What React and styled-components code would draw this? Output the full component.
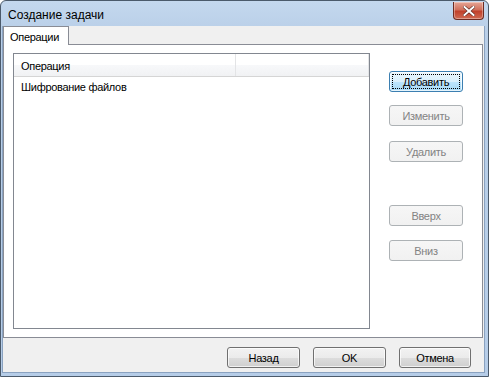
import React from 'react';
import styled, { createGlobalStyle } from 'styled-components';

const GlobalStyle = createGlobalStyle`
	html, body {
		margin: 0;
		padding: 0;
		background: #ffffff;
	}
	body {
		font-family: "Liberation Sans", Arial, sans-serif;
		font-size: 11px;
		letter-spacing: -0.3px;
		color: #000;
	}
`;

const StyledWindow = styled.div`
	box-sizing: border-box;
	display: flex;
	flex-direction: column;
	width: 489px;
	height: 377px;
	border: 1px solid #4b5a6b;
	border-radius: 6px 6px 0 0;
	background: linear-gradient(#c4d8ee, #b9cfe8 30px, #b6cde8);
	overflow: hidden;
`;

const StyledTitleBar = styled.div`
	display: flex;
	align-items: flex-start;
	justify-content: space-between;
	height: 25px;
	padding: 0 4px 0 7px;
`;

const StyledTitle = styled.div`
	margin-top: 6px;
	font-family: "Liberation Sans", Arial, sans-serif;
	font-size: 12px;
	letter-spacing: 0;
	line-height: 16px;
	color: #000;
`;

const StyledClose = styled.div`
	box-sizing: border-box;
	display: flex;
	align-items: center;
	justify-content: center;
	width: 31px;
	height: 18px;
	margin-top: 1px;
	border: 1px solid #6d2b21;
	border-radius: 0 0 4px 4px;
	border-top: none;
	background: linear-gradient(#e6a696, #d1705c 45%, #c1412b 55%, #cf6a52);
	box-shadow: inset 0 0 0 1px rgba(255, 255, 255, 0.35);
`;

const StyledClient = styled.div`
	flex: 1;
	display: flex;
	flex-direction: column;
	margin: 0 3px 3px 1px;
	background: #f0f0f0;
	border: 1px solid #8aa2c0;
	border-top: none;
`;

const StyledTabs = styled.div`
	display: flex;
	flex-direction: column;
	height: 312px;
	margin-right: 1px;
`;

const StyledTabStrip = styled.div`
	display: flex;
	height: 18px;
`;

const StyledTab = styled.div`
	box-sizing: border-box;
	position: relative;
	z-index: 1;
	width: 66px;
	height: 19px;
	padding: 3px 0 0 6px;
	border: 1px solid #898c95;
	border-bottom: none;
	background: #ffffff;
	line-height: 14px;
`;

const StyledPanel = styled.div`
	box-sizing: border-box;
	flex: 1;
	display: flex;
	padding: 8px 20px 8px 9px;
	border: 1px solid #898c95;
	background: #ffffff;
`;

const StyledList = styled.div`
	box-sizing: border-box;
	width: 357px;
	border: 1px solid #828790;
	background: #fff;
`;

const StyledHeader = styled.div`
	display: flex;
	height: 22px;
	background: linear-gradient(#ffffff, #ffffff 50%, #f7f8fa 50%, #f1f2f4);
	border-bottom: 1px solid #d5d5d5;
`;

const StyledHeaderCell = styled.div`
	box-sizing: border-box;
	width: ${(p) => p.$w}px;
	padding: 5px 0 0 7px;
	border-right: 1px solid #e3e4e6;
	line-height: 14px;
`;

const StyledItem = styled.div`
	height: 18px;
	padding: 3px 0 0 7px;
	line-height: 14px;
`;

const StyledSide = styled.div`
	display: flex;
	flex-direction: column;
	margin-left: 19px;
	padding-top: 18px;
`;

const StyledButton = styled.button`
	box-sizing: border-box;
	position: relative;
	display: flex;
	align-items: center;
	justify-content: center;
	width: ${(p) => p.$w || 74}px;
	height: 21px;
	margin: ${(p) => p.$mt || 0}px 0 0 0;
	padding: 0;
	border: 1px solid ${(p) => (p.$focus ? '#3c7fb1' : p.disabled ? '#adb2b5' : '#707070')};
	border-radius: 3px;
	background: ${(p) =>
		p.disabled
			? 'linear-gradient(#f6f6f6, #f1f1f1)'
			: p.$focus
			? 'linear-gradient(#eaf6fd, #d9f0fc 50%, #bee6fd 50%, #a7d9f5)'
			: 'linear-gradient(#f2f2f2, #ebebeb 50%, #dddddd 50%, #cfcfcf)'};
	box-shadow: inset 0 0 0 1px ${(p) => (p.disabled ? 'transparent' : 'rgba(255,255,255,0.7)')};
	font-family: "Liberation Sans", Arial, sans-serif;
	font-size: 11px;
	letter-spacing: -0.3px;
	color: ${(p) => (p.disabled ? '#838383' : '#000')};
	&::after {
		content: '';
		display: ${(p) => (p.$focus ? 'block' : 'none')};
		position: absolute;
		inset: 2px;
		border: 1px dotted #000;
	}
`;

const StyledFooter = styled.div`
	display: flex;
	justify-content: flex-end;
	gap: 13px;
	padding: 9px 13px 0 0;
`;

export default function App() {
	return (
		<>
			<GlobalStyle />
			<StyledWindow>
				<StyledTitleBar>
					<StyledTitle>Создание задачи</StyledTitle>
					<StyledClose>
						<svg width="12" height="10" viewBox="0 0 12 10">
							<path
								d="M1.5 1 L10.5 9 M10.5 1 L1.5 9"
								stroke="#5a2a22"
								strokeWidth="3.2"
								strokeLinecap="square"
							/>
							<path
								d="M1.5 1 L10.5 9 M10.5 1 L1.5 9"
								stroke="#ffffff"
								strokeWidth="2"
								strokeLinecap="square"
							/>
						</svg>
					</StyledClose>
				</StyledTitleBar>
				<StyledClient>
					<StyledTabs>
						<StyledTabStrip>
							<StyledTab>Операции</StyledTab>
						</StyledTabStrip>
						<StyledPanel>
							<StyledList>
								<StyledHeader>
									<StyledHeaderCell $w={222}>Операция</StyledHeaderCell>
									<StyledHeaderCell $w={133} />
								</StyledHeader>
								<StyledItem>Шифрование файлов</StyledItem>
							</StyledList>
							<StyledSide>
								<StyledButton $focus>Добавить</StyledButton>
								<StyledButton $mt={13} disabled>
									Изменить
								</StyledButton>
								<StyledButton $mt={15} disabled>
									Удалить
								</StyledButton>
								<StyledButton $mt={43} disabled>
									Вверх
								</StyledButton>
								<StyledButton $mt={14} disabled>
									Вниз
								</StyledButton>
							</StyledSide>
						</StyledPanel>
					</StyledTabs>
					<StyledFooter>
						<StyledButton $w={73}>Назад</StyledButton>
						<StyledButton $w={73}>OK</StyledButton>
						<StyledButton $w={72}>Отмена</StyledButton>
					</StyledFooter>
				</StyledClient>
			</StyledWindow>
		</>
	);
}
